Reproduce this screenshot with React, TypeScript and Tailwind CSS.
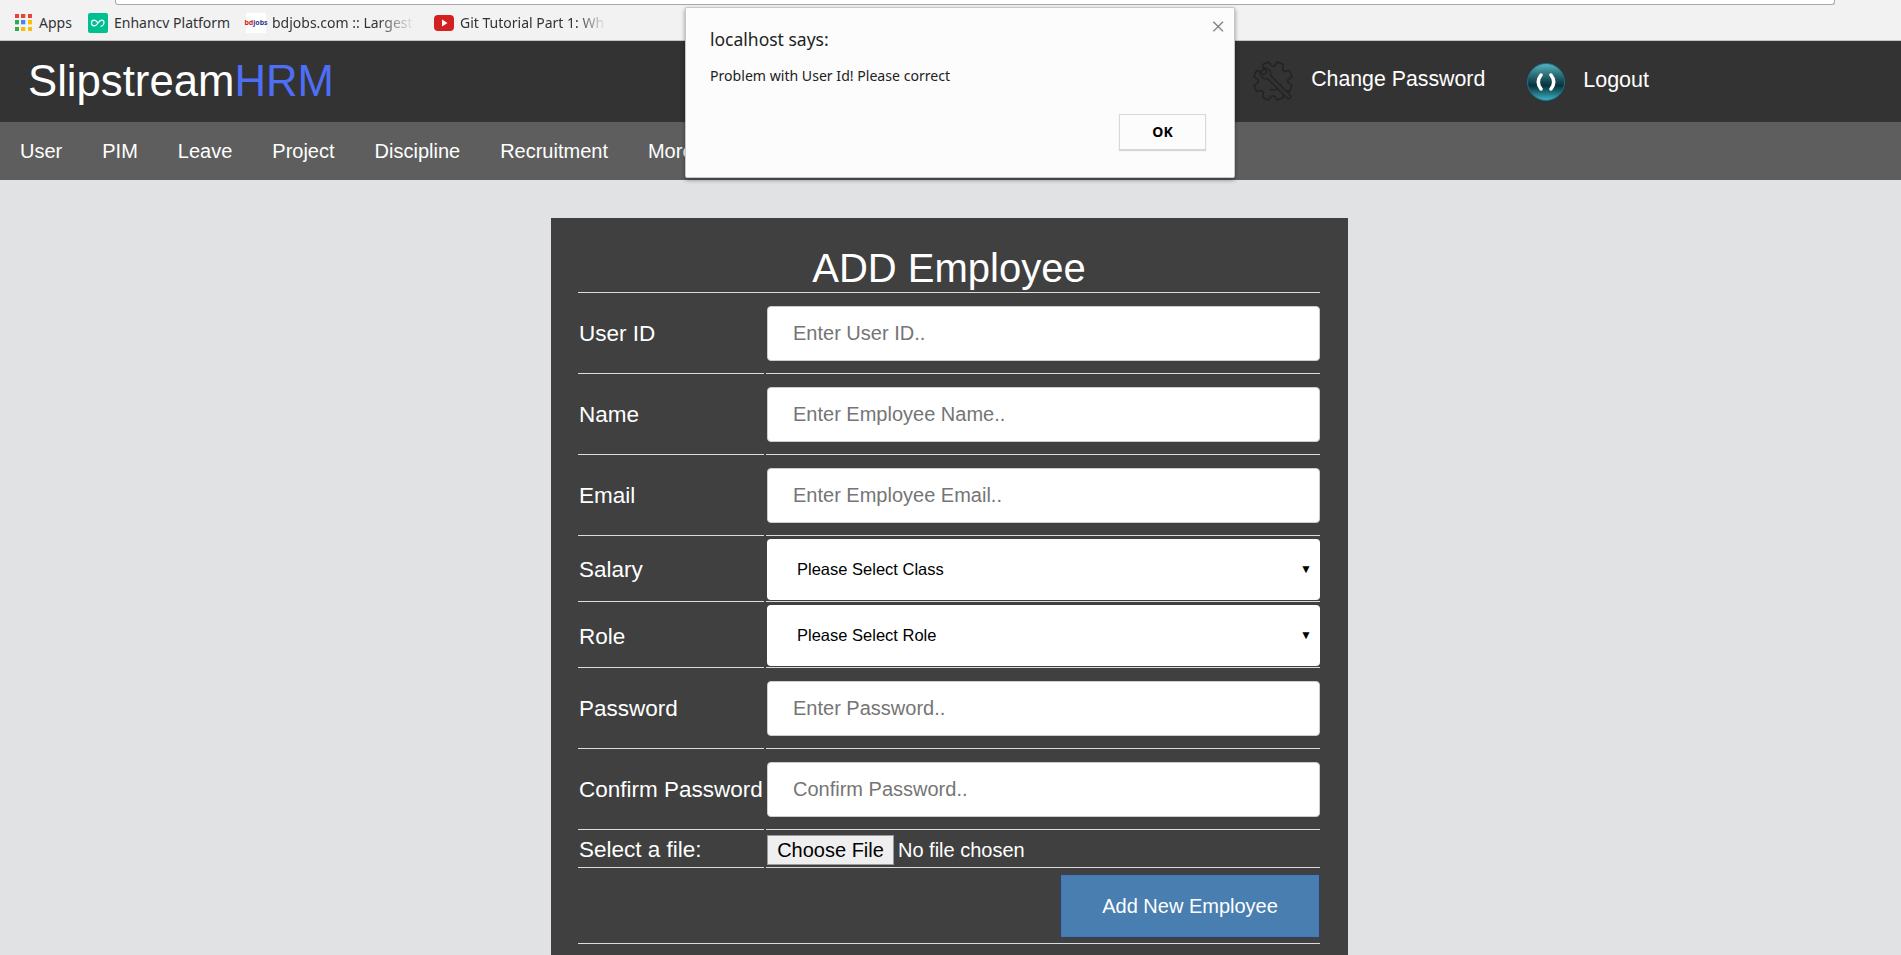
import { useState } from 'react'

const navItems = ['User', 'PIM', 'Leave', 'Project', 'Discipline', 'Recruitment', 'More']

const textFields = {
  userId: { label: 'User ID', placeholder: 'Enter User ID..', type: 'text' },
  name: { label: 'Name', placeholder: 'Enter Employee Name..', type: 'text' },
  email: { label: 'Email', placeholder: 'Enter Employee Email..', type: 'text' },
  password: { label: 'Password', placeholder: 'Enter Password..', type: 'password' },
  confirm: { label: 'Confirm Password', placeholder: 'Confirm Password..', type: 'password' },
}

function AppsIcon() {
  const colors = ['#ea4335', '#ea4335', '#ea4335', '#34a853', '#4285f4', '#fbbc05', '#34a853', '#fbbc05', '#fbbc05']
  return (
    <div className="grid grid-cols-3 gap-[2px] w-[17px] h-[17px]">
      {colors.map((c, i) => (
        <svg key={i} viewBox="0 0 4 4" className="w-[4.3px] h-[4.3px]">
          <rect width="4" height="4" fill={c} />
        </svg>
      ))}
    </div>
  )
}

function EnhancvIcon() {
  return (
    <svg viewBox="0 0 20 20" className="w-5 h-5">
      <rect width="20" height="20" rx="2" fill="#00c091" />
      <path
        d="M10 10c-1.4-2-2.400-2.800-3.700-2.800a2.800 2.800 0 0 0 0 5.600c1.500 0 2.500-1 3.700-2.800s2.200-2.800 3.700-2.800c1.300 0 2.300 1 2.300 2.400 0 2-1.600 3.700-3.400 3.700"
        fill="none"
        stroke="#fff"
        strokeWidth="1.2"
      />
    </svg>
  )
}

function YoutubeIcon() {
  return (
    <svg viewBox="0 0 20 20" className="w-5 h-5">
      <rect y="2" width="20" height="16" rx="4" fill="#d32020" />
      <path d="M8 6.500v7l5.500-3.500z" fill="#fff" />
    </svg>
  )
}

// 8 tooth gear outline, centred at 20,20 in a 42 unit box
function gearPath() {
  const pts: string[] = []
  for (let i = 0; i < 8; i++) {
    const a = (i * Math.PI) / 4 + Math.PI / 8
    const at = (r: number, d: number) => {
      const x = 20 + r * Math.cos(a + d)
      const y = 20 + r * Math.sin(a + d)
      return `${x.toFixed(1)} ${y.toFixed(1)}`
    }
    pts.push(at(15, -0.3), at(19.5, -0.17), at(19.5, 0.17), at(15, 0.3))
  }
  return 'M' + pts.join('L') + 'Z'
}

function GearWrenchIcon() {
  return (
    <svg viewBox="0 0 42 42" className="w-[42px] h-[42px]" fill="none" stroke="#232323" strokeWidth="1.5" strokeLinejoin="round">
      <path d={gearPath()} />
      <path d="M28 23a8.500 8.500 0 0 1-11 5.500" />
      <path d="M11 7A6 6 0 0 1 17.500 14.500L37 34a2.100 2.100 0 0 1-3 3L14.500 17.500A6 6 0 0 1 7 11L11 14L14 11Z" fill="#333333" />
    </svg>
  )
}

function LogoutOrb() {
  return (
    <div className="w-[38px] h-[38px] rounded-full bg-gradient-to-b from-[#56b3bd] via-[#07333b] via-60% to-[#3db4c4] border border-[#1a6f92] flex items-center justify-center">
      <svg viewBox="0 0 24 24" className="w-6 h-6">
        <path d="M7 5Q1.500 12 7 19" fill="none" stroke="#fff" strokeWidth="3.500" strokeLinecap="round" />
        <path d="M17 5Q22.500 12 17 19" fill="none" stroke="#fff" strokeWidth="3.500" strokeLinecap="round" />
      </svg>
    </div>
  )
}

function FieldRow({ label, children, className, labelClass = 'pt-[2px]' }: {
  label: string
  children: React.ReactNode
  className: string
  labelClass?: string
}) {
  return (
    <div className="grid grid-cols-[186px_554px] gap-x-[2px]">
      <div className={`border-b border-[#dcdcdc] flex items-center pl-px text-[22.5px] text-white whitespace-nowrap ${labelClass}`}>{label}</div>
      <div className={`border-b border-[#dcdcdc] pl-px ${className}`}>{children}</div>
    </div>
  )
}

function TextRow({ label, placeholder, type, value, onChange }: {
  label: string
  placeholder: string
  type: string
  value: string
  onChange: (v: string) => void
}) {
  return (
    <FieldRow label={label} className="pt-[13px] pb-[12px]">
      <input
        type={type}
        value={value}
        onChange={(e) => onChange(e.target.value)}
        placeholder={placeholder}
        className="block w-[553px] h-[55px] px-[25px] bg-white border border-[#cccccc] rounded-[4px] text-[20px] text-black placeholder:text-[#757575]"
      />
    </FieldRow>
  )
}

function SelectRow({ label, placeholder, labelClass }: { label: string; placeholder: string; labelClass: string }) {
  return (
    <FieldRow label={label} className="pt-[3px] pb-px" labelClass={labelClass}>
      <div className="relative w-[553px]">
        <select className="block w-full h-[61px] pl-[30px] bg-white rounded-[4px] appearance-none text-[16.5px] text-black">
          <option>{placeholder}</option>
        </select>
        <span className="absolute right-[8px] top-[21px] text-[12px] text-black pointer-events-none">▼</span>
      </div>
    </FieldRow>
  )
}

export default function App() {
  const [values, setValues] = useState<Record<string, string>>({})
  const [showAlert, setShowAlert] = useState(true)

  const bind = (key: keyof typeof textFields) => ({
    ...textFields[key],
    value: values[key] || '',
    onChange: (v: string) => setValues({ ...values, [key]: v }),
  })

  return (
    <div className="relative h-[955px] overflow-hidden flex flex-col bg-[#e1e2e4] font-['Liberation_Sans',Arial,sans-serif]">
      {/* Browser chrome */}
      <div className="h-[41px] shrink-0 bg-[#f2f2f2] border-b border-[#c4c4c4]">
        <div className="ml-[115px] w-[1720px] h-[5px] bg-white border-x border-b border-[#a8a8a8] rounded-b-[3px]" />
        <div className="flex items-center h-[35px] pl-[15px] font-['Noto_Sans',sans-serif] text-[14px] text-[#333]">
          <AppsIcon />
          <span className="ml-[7px] w-[49px]">Apps</span>
          <EnhancvIcon />
          <span className="ml-[6px] w-[132px] whitespace-nowrap">Enhancv Platform</span>
          <div className="w-5 h-5 bg-white flex items-center justify-center text-[7px] leading-none font-bold text-[#2b3a8c]">
            <span className="text-[#d32020]">bd</span>jobs
          </div>
          <span className="ml-[6px] w-[162px] whitespace-nowrap overflow-hidden [mask-image:linear-gradient(to_right,black_65%,transparent_88%)]">bdjobs.com :: Largest</span>
          <YoutubeIcon />
          <span className="ml-[6px] w-[146px] whitespace-nowrap overflow-hidden [mask-image:linear-gradient(to_right,black_80%,transparent)]">Git Tutorial Part 1: Wh</span>
        </div>
      </div>

      {/* Header */}
      <div className="h-[81px] shrink-0 bg-[#333333] flex items-center pl-[28px] text-white">
        <div className="text-[43.7px] leading-none mb-[2px]">
          Slipstream<span className="text-[#4d6ef5]">HRM</span>
        </div>
        <div className="ml-auto flex items-center pr-[252px] text-[21.5px]">
          <GearWrenchIcon />
          <a href="#" className="ml-[16px] mb-[3px] text-[21.3px]">Change Password</a>
          <div className="ml-[42px]"><LogoutOrb /></div>
          <a href="#" className="ml-[18px] mb-[3px]">Logout</a>
        </div>
      </div>

      {/* Nav */}
      <div className="h-[58px] shrink-0 bg-[#5e5e5e] flex items-center text-white text-[20px]">
        {navItems.map((item) => (
          <a key={item} href="#" className="px-[20px]">{item}</a>
        ))}
      </div>

      {/* Form card */}
      <div className="flex-1 pt-[38px]">
        <div className="ml-[551px] w-[797px] h-full bg-[#404040] pt-[28px] pl-[27px]">
          <div className="w-[742px] h-[47px] border-b border-[#dcdcdc] text-center text-[40px] leading-[44px] text-white">
            ADD Employee
          </div>
          <TextRow {...bind('userId')} />
          <TextRow {...bind('name')} />
          <TextRow {...bind('email')} />
          <SelectRow label="Salary" placeholder="Please Select Class" labelClass="pt-[2px]" />
          <SelectRow label="Role" placeholder="Please Select Role" labelClass="pt-[5px]" />
          <TextRow {...bind('password')} />
          <TextRow {...bind('confirm')} />
          <FieldRow label="Select a file:" className="pt-[5px] pb-[2px]">
            <input
              type="file"
              className="block h-[30px] text-[20px] leading-[28px] text-white file:h-[30px] file:w-[127px] file:mr-[4px] file:bg-[#efefef] file:text-black file:border file:border-[#9a9a9a]"
            />
          </FieldRow>
          <div className="w-[742px] border-b border-[#dcdcdc] pt-[7px] pb-[6px] flex justify-end pr-px">
            <button className="w-[258px] h-[62px] bg-[#487eb0] border border-[#3a78d6] text-white text-[20px]">
              Add New Employee
            </button>
          </div>
        </div>
      </div>

      {/* Alert dialog */}
      {showAlert && (
        <div className="absolute left-[685px] top-[7px] w-[550px] h-[171px] bg-[#fcfcfc] border border-[#c8c8c8] rounded-[2px] shadow-[0_2px_4px_rgba(0,0,0,0.4)] font-['Noto_Sans',sans-serif]">
          <button onClick={() => setShowAlert(false)} className="absolute right-[9px] top-[6px] text-[24px] leading-[24px] font-light text-[#777]">×</button>
          <div className="pl-[24px] pt-[18px] text-[17.5px] text-[#222]">localhost says:</div>
          <div className="pl-[24px] pt-[13px] text-[14.1px] text-[#222]">Problem with User Id! Please correct</div>
          <button onClick={() => setShowAlert(false)} className="absolute left-[433px] top-[106px] w-[87px] h-[36px] pb-[2px] bg-[#fcfcfc] border border-[#d8d8d8] shadow-[0_1px_1px_rgba(0,0,0,0.15)] text-[14px] font-bold text-black">
            OK
          </button>
        </div>
      )}
    </div>
  )
}
